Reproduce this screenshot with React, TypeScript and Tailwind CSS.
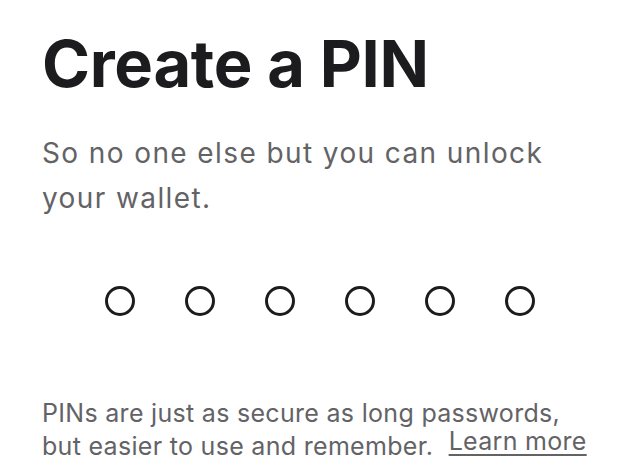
import React from "react";

export default function App() {
  const dots = [0, 1, 2, 3, 4, 5];
  return (
    <div className="w-[640px] h-[474px] bg-white overflow-hidden" style={{ fontFamily: "Inter, 'Noto Sans', sans-serif" }}>
      <div className="pl-[42px] pr-[40px] pt-[24px]">
        <h1 className="text-[65px] leading-[80px] font-bold text-[#1c1c1e] tracking-[-0.3px]">Create a PIN</h1>
        <p className="mt-[27px] text-[28px] leading-[45px] text-[#636366] tracking-[1.4px]">
          So no one else but you can unlock
          <br />
          your wallet.
        </p>
        <div className="mt-[65px] flex gap-[50px] pl-[63px]">
          {dots.map((d) => (
            <div key={d} className="w-[30px] h-[30px] rounded-full border-[3px] border-[#1c1c1e]" />
          ))}
        </div>
        <p className="mt-[81px] text-[25px] leading-[33px] text-[#636366] tracking-[0.3px] whitespace-nowrap">
          PINs are just as secure as long passwords,
          <br />
          but easier to use and remember.{" "}
          <span className="ml-[8px] align-[5px] leading-[20px] underline underline-offset-[4px] decoration-[2px]">Learn more</span>
        </p>
      </div>
    </div>
  );
}
